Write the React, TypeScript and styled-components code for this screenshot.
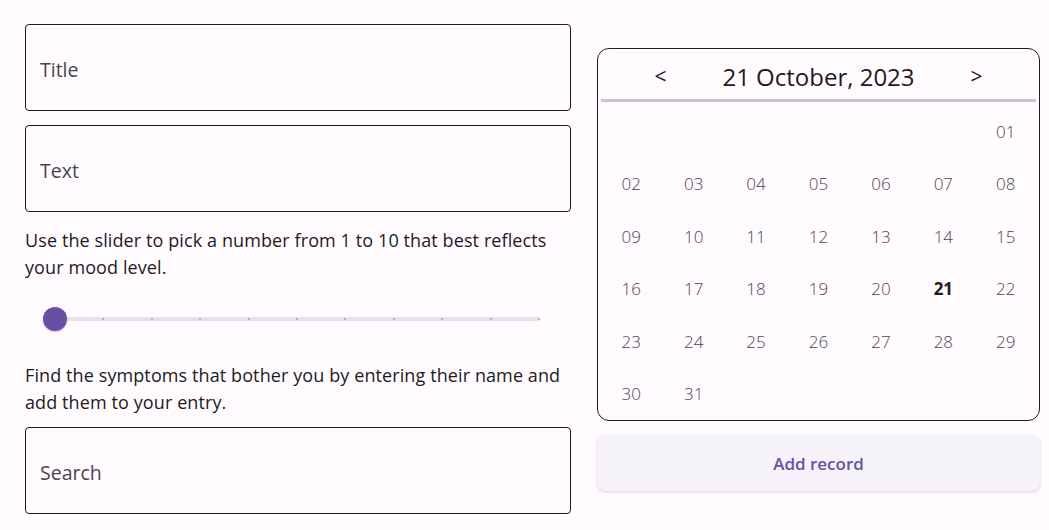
import React from "react";
import styled, { createGlobalStyle } from "styled-components";

const Global = createGlobalStyle`
  html, body { margin: 0; padding: 0; background: #fffbfe; }
  body { font-family: "Open Sans", "Noto Sans", sans-serif; color: #1c1b1f; }
`;

const Page = styled.div`
  display: flex;
  gap: 26px;
  padding: 24px 9px 0 25px;
  width: 1049px;
  height: 530px;
  box-sizing: border-box;
  overflow: hidden;
`;

const LeftCol = styled.div`
  width: 546px;
  display: flex;
  flex-direction: column;
`;

const RightCol = styled.div`
  width: 443px;
  display: flex;
  flex-direction: column;
  padding-top: 24px;
`;

const Field = styled.div<{ $mt?: number }>`
  height: 87px;
  box-sizing: border-box;
  border: 1px solid #1c1b1f;
  border-radius: 4px;
  display: flex;
  align-items: center;
  padding: 4px 14px 0;
  margin-top: ${(p) => p.$mt ?? 0}px;
  font-size: 19.5px;
  color: #49454f;
`;

const Para = styled.p<{ $mt: number }>`
  margin: ${(p) => p.$mt}px 0 0;
  font-size: 18px;
  line-height: 27px;
  color: #1c1b1f;
  letter-spacing: 0.1px;
`;

const SliderWrap = styled.div`
  position: relative;
  height: 24px;
  margin: 26px 0 0 18px;
  width: 497px;
`;

const Track = styled.div`
  position: absolute;
  left: 12px;
  right: 0;
  top: 10px;
  height: 4px;
  border-radius: 2px;
  background: #e7e0ec;
`;

const Tick = styled.div`
  position: absolute;
  top: 11px;
  width: 2px;
  height: 2px;
  border-radius: 1px;
  background: #a8a3ad;
`;

const Thumb = styled.div`
  position: absolute;
  left: 0;
  top: 0;
  width: 24px;
  height: 24px;
  border-radius: 50%;
  background: #6750a4;
  box-shadow: 0 1px 2px rgba(0, 0, 0, 0.2);
`;

const Calendar = styled.div`
  height: 373px;
  box-sizing: border-box;
  border: 1px solid #1c1b1f;
  border-radius: 12px;
  display: flex;
  flex-direction: column;
`;

const Header = styled.div`
  height: 56px;
  padding-top: 4px;
  box-sizing: border-box;
  display: flex;
  align-items: center;
  justify-content: center;
  font-size: 24px;
  color: #1c1b1f;
`;

const Nav = styled.span`
  width: 60px;
  text-align: center;
  font-size: 21px;
`;

const HeaderTitle = styled.span`
  width: 200px;
  text-align: center;
  margin: 0 28px;
`;

const Divider = styled.div`
  height: 3px;
  margin: 0 3px;
  background: #cac4d0;
`;

const Grid = styled.div`
  display: grid;
  grid-template-columns: repeat(7, 1fr);
  grid-auto-rows: 52.5px;
  padding: 3px 2px 0;
`;

const Day = styled.div<{ $bold?: boolean }>`
  display: flex;
  align-items: center;
  justify-content: center;
  font-size: 17px;
  font-weight: ${(p) => (p.$bold ? 700 : 300)};
  color: ${(p) => (p.$bold ? "#1c1b1f" : "#49454f")};
`;

const Button = styled.button`
  margin-top: 14px;
  height: 56px;
  border: none;
  border-radius: 8px;
  background: #f6f2fa;
  box-shadow: 0 1px 3px rgba(0, 0, 0, 0.18);
  color: #6750a4;
  font-family: "Open Sans", "Noto Sans", sans-serif;
  font-size: 17px;
  font-weight: 600;
  cursor: pointer;
`;

export default function App() {
  const cells: (number | null)[] = [null, null, null, null, null, null];
  for (let d = 1; d <= 31; d++) cells.push(d);
  const ticks = Array.from({ length: 10 }, (_, i) => 12 + 48.4 * (i + 1));
  return (
    <>
      <Global />
      <Page>
        <LeftCol>
          <Field>Title</Field>
          <Field $mt={14}>Text</Field>
          <Para $mt={15}>
            Use the slider to pick a number from 1 to 10 that best reflects
            your mood level.
          </Para>
          <SliderWrap>
            <Track />
            {ticks.map((x, i) => (
              <Tick key={i} style={{ left: x - 1 }} />
            ))}
            <Thumb />
          </SliderWrap>
          <Para $mt={31}>
            Find the symptoms that bother you by entering their name and add
            them to your entry.
          </Para>
          <Field $mt={11}>Search</Field>
        </LeftCol>
        <RightCol>
          <Calendar>
            <Header>
              <Nav>&lt;</Nav>
              <HeaderTitle>21 October, 2023</HeaderTitle>
              <Nav>&gt;</Nav>
            </Header>
            <Divider />
            <Grid>
              {cells.map((d, i) => (
                <Day key={i} $bold={d === 21}>
                  {d === null ? "" : String(d).padStart(2, "0")}
                </Day>
              ))}
            </Grid>
          </Calendar>
          <Button>Add record</Button>
        </RightCol>
      </Page>
    </>
  );
}
